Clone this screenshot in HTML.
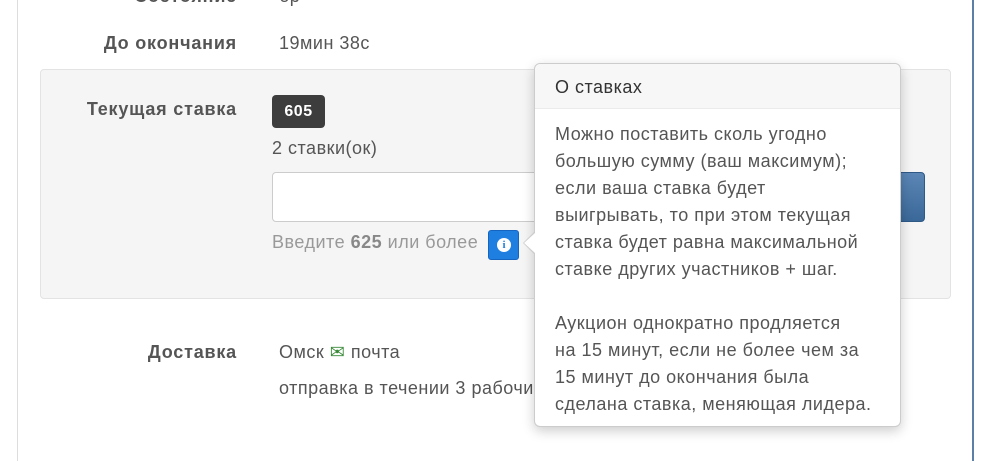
<!DOCTYPE html>
<html><head><meta charset="utf-8"><style>
body{margin:0;width:1000px;height:461px;overflow:hidden;background:#fff;font-family:"Liberation Sans",sans-serif;color:#555;font-size:18px;letter-spacing:0.5px;position:relative}
.a{position:absolute;white-space:nowrap}
.lbl{font-weight:bold;color:#555;text-align:right;width:220px;left:17px;letter-spacing:0.8px}
</style></head><body>
<div class="a" style="left:17px;top:0;width:1px;height:461px;background:#ddd"></div>
<div class="a" style="left:972px;top:0;width:2px;height:461px;background:#5a7fa8"></div>
<div class="a lbl" style="top:-14px">Состояние</div>
<div class="a" style="left:279px;top:-14px">бр</div>
<div class="a lbl" style="top:33px">До окончания</div>
<div class="a" style="left:279px;top:33px">19мин 38с</div>
<div class="a" style="left:40px;top:69px;width:911px;height:230px;background:#f5f5f5;border:1px solid #e3e3e3;border-radius:4px;box-sizing:border-box"></div>
<div class="a lbl" style="top:99px">Текущая ставка</div>
<div class="a" style="left:272px;top:95px;width:53px;height:33px;background:#3d3d3d;border-radius:4px;color:#fff;font-weight:bold;font-size:16px;line-height:33px;text-align:center">605</div>
<div class="a" style="left:272px;top:138px">2 ставки(ок)</div>
<div class="a" style="left:272px;top:172px;width:300px;height:50px;background:#fff;border:1px solid #ccc;border-radius:4px;box-sizing:border-box"></div>
<div class="a" style="left:880px;top:172px;width:45px;height:50px;background:linear-gradient(#5b86b6,#3a6898);border-radius:4px;border:1px solid #2f5a87;box-sizing:border-box"></div>
<div class="a" style="left:272px;top:232px;color:#999">Введите <b style="color:#888">625</b> или более</div>
<div class="a" style="left:488px;top:230px;width:31px;height:30px;background:#1e7fe0;border-radius:3px;border:1px solid #1565c0;box-sizing:border-box"><div style="position:absolute;left:8px;top:7px;width:14px;height:14px;border-radius:50%;background:#fff;color:#1e7fe0;font-weight:bold;font-size:11px;line-height:14px;text-align:center;letter-spacing:0;font-family:'Liberation Serif',serif">i</div></div>
<div class="a lbl" style="top:342px">Доставка</div>
<div class="a" style="left:279px;top:342px">Омск <span style="color:#3a8a3a">✉</span> почта</div>
<div class="a" style="left:279px;top:378px">отправка в течении 3 рабочих дней</div>
<div class="a" style="left:534px;top:63px;width:367px;height:364px;background:#fff;border:1px solid #ccc;border-radius:6px;box-sizing:border-box;box-shadow:0 4px 12px rgba(0,0,0,.2)">
<div style="height:44px;background:#f7f7f7;border-bottom:1px solid #ebebeb;border-radius:6px 6px 0 0;color:#333;line-height:46px;padding-left:20px">О ставках</div>
<div style="padding:12px 0 0 20px;line-height:27px;color:#555;white-space:nowrap">Можно поставить сколь угодно<br>большую сумму (ваш максимум);<br>если ваша ставка будет<br>выигрывать, то при этом текущая<br>ставка будет равна максимальной<br>ставке других участников + шаг.<br><br>Аукцион однократно продляется<br>на 15 минут, если не более чем за<br>15 минут до окончания была<br>сделана ставка, меняющая лидера.</div>
</div>
<div class="a" style="left:523px;top:232px;width:0;height:0;border-top:11px solid transparent;border-bottom:11px solid transparent;border-right:11px solid #ccc"></div>
<div class="a" style="left:524px;top:233px;width:0;height:0;border-top:10px solid transparent;border-bottom:10px solid transparent;border-right:11px solid #fff"></div>
</body></html>
